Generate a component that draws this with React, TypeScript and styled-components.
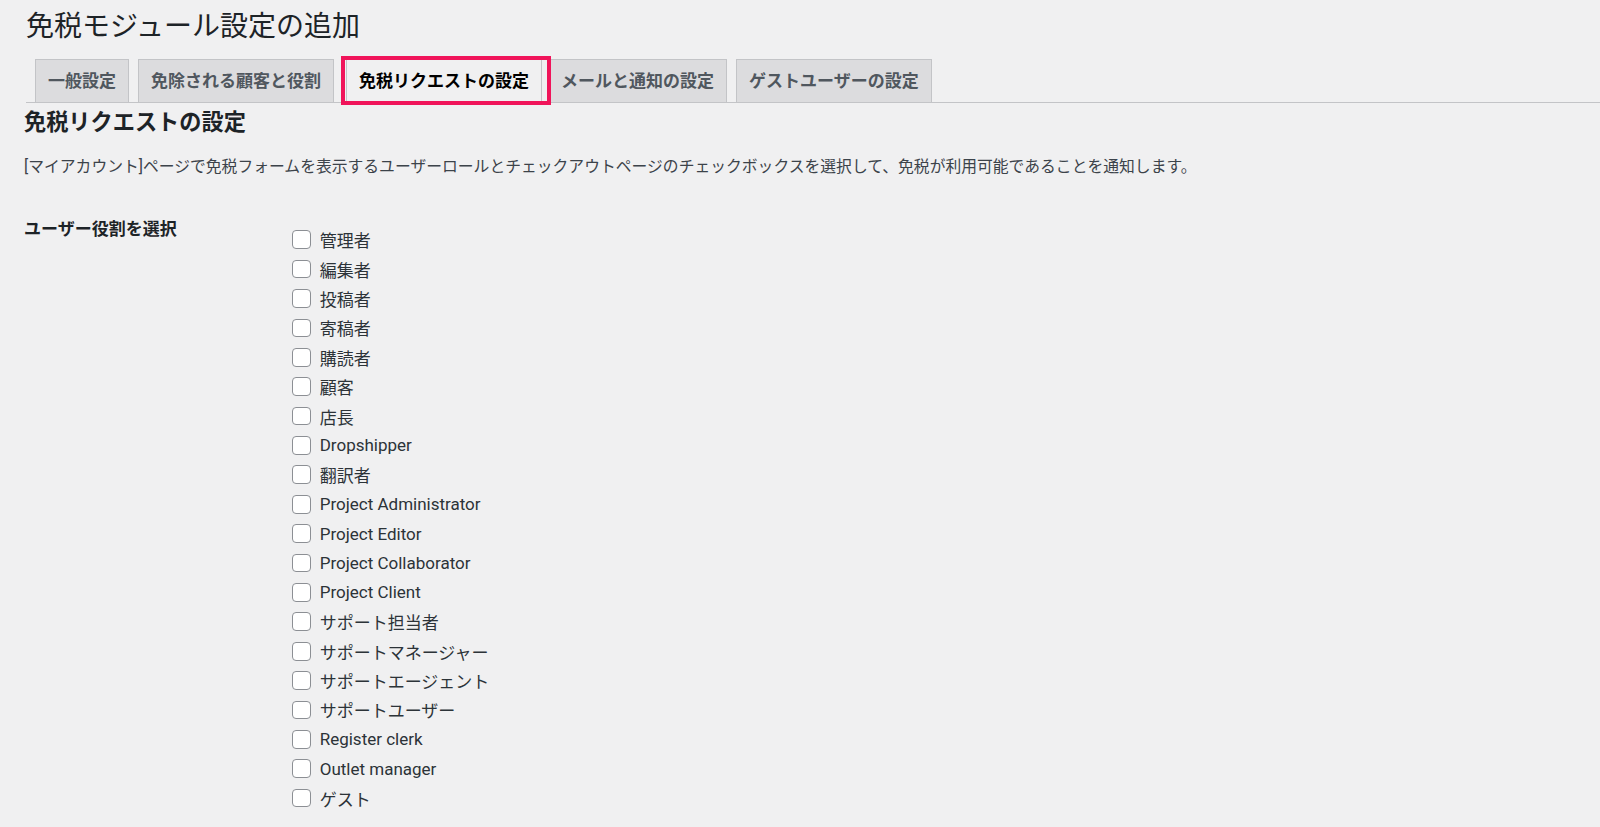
import React, { useState } from 'react';
import styled, { createGlobalStyle, css } from 'styled-components';

const tabs = [
  '一般設定',
  '免除される顧客と役割',
  '免税リクエストの設定',
  'メールと通知の設定',
  'ゲストユーザーの設定',
];

const roles = [
  '管理者',
  '編集者',
  '投稿者',
  '寄稿者',
  '購読者',
  '顧客',
  '店長',
  'Dropshipper',
  '翻訳者',
  'Project Administrator',
  'Project Editor',
  'Project Collaborator',
  'Project Client',
  'サポート担当者',
  'サポートマネージャー',
  'サポートエージェント',
  'サポートユーザー',
  'Register clerk',
  'Outlet manager',
  'ゲスト',
];

function App() {
  const [activeTab, setActiveTab] = useState(2);
  const [checked, setChecked] = useState<Record<string, boolean>>({});

  const toggleRole = (role: string) => {
    setChecked((prev) => ({ ...prev, [role]: !prev[role] }));
  };

  return (
    <Wrap>
      <GlobalStyle />
      <Title>免税モジュール設定の追加</Title>
      <TabBar>
        {tabs.map((tab, i) => (
          <Tab key={tab} $active={i === activeTab} onClick={() => setActiveTab(i)}>
            {tab}
          </Tab>
        ))}
      </TabBar>
      <SectionTitle>免税リクエストの設定</SectionTitle>
      <Description>
        [マイアカウント]ページで免税フォームを表示するユーザーロールとチェックアウトページのチェックボックスを選択して、免税が利用可能であることを通知します。
      </Description>
      <FormRow>
        <FieldLabel>ユーザー役割を選択</FieldLabel>
        <RoleList>
          {roles.map((role) => (
            <RoleItem key={role}>
              <Checkbox
                type="checkbox"
                checked={!!checked[role]}
                onChange={() => toggleRole(role)}
              />
              {role}
            </RoleItem>
          ))}
        </RoleList>
      </FormRow>
    </Wrap>
  );
}

const GlobalStyle = createGlobalStyle`
  html, body {
    margin: 0;
    padding: 0;
    background: #f0f0f1;
  }
  body {
    font-family: Roboto, "Noto Sans CJK JP", "Noto Sans", sans-serif;
    color: #3c434a;
  }
`;

const Wrap = styled.div`
  padding: 9px 0 0 24px;
  min-height: 818px;
`;

const Title = styled.h1`
  margin: 0 0 15px 2px;
  font-size: 28px;
  font-weight: 400;
  line-height: 35px;
  color: #1d2327;
`;

const TabBar = styled.div`
  display: flex;
  align-items: flex-end;
  margin-left: 2px;
  border-bottom: 1px solid #c3c4c7;
`;

// the active tab carries the pink highlight frame from the screenshot
const activeTabStyle = css`
  z-index: 1;
  margin: 0 -3px -1px 12px;
  color: #000;
  background: #f0f0f1;
  border-bottom-color: #f0f0f1;

  &::after {
    content: '';
    position: absolute;
    top: -4px;
    left: -6px;
    right: -10px;
    bottom: -3px;
    border: 4px solid #f0145a;
    pointer-events: none;
  }
`;

const Tab = styled.button<{ $active?: boolean }>`
  position: relative;
  margin: 0 0 -1px 9px;
  padding: 6px 12px;
  font-family: inherit;
  font-size: 17px;
  font-weight: 700;
  line-height: 30px;
  color: #50575e;
  background: #dcdcde;
  border: 1px solid #c3c4c7;
  cursor: pointer;
  white-space: nowrap;

  ${(p) => p.$active && activeTabStyle}
`;

const SectionTitle = styled.h2`
  margin: 4px 0 0;
  font-size: 22.2px;
  font-weight: 700;
  line-height: 31px;
  color: #1d2327;
`;

const Description = styled.p`
  margin: 17px 0 0;
  font-size: 15.8px;
  line-height: 24px;
  color: #3c434a;
`;

const FormRow = styled.div`
  display: grid;
  grid-template-columns: 268px 1fr;
  margin-top: 40px;
`;

const FieldLabel = styled.div`
  font-size: 17px;
  font-weight: 700;
  line-height: 21px;
  color: #1d2327;
`;

const RoleList = styled.div`
  display: flex;
  flex-direction: column;
  padding-top: 6px;
`;

const RoleItem = styled.label`
  display: flex;
  align-items: center;
  gap: 9px;
  height: 29.4px;
  font-size: 17px;
  color: #2c3338;
  cursor: pointer;
`;

const Checkbox = styled.input`
  appearance: none;
  width: 18.7px;
  height: 18.7px;
  margin: 0;
  box-sizing: border-box;
  border: 1px solid #8c8f94;
  border-radius: 4px;
  background: #fff;
  cursor: pointer;

  &:checked {
    background: #2271b1;
    border-color: #2271b1;
  }
`;

export default App;
